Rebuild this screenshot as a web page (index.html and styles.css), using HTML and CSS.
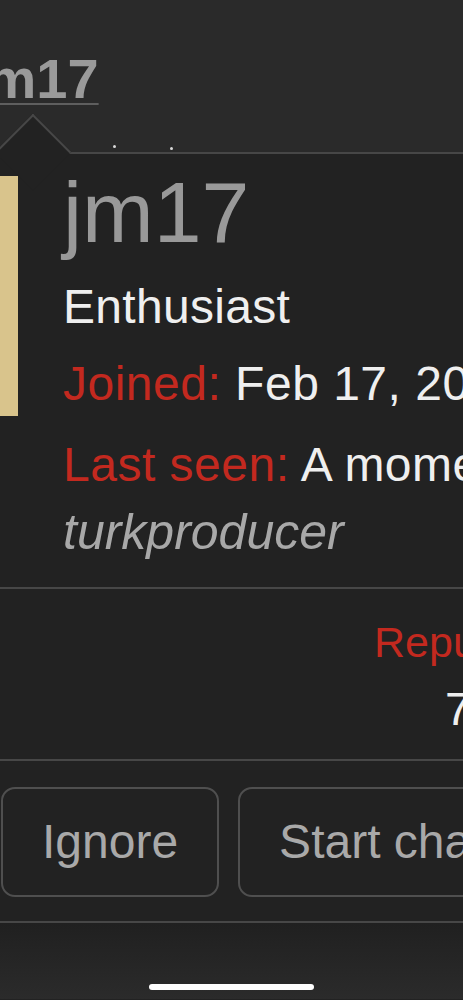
FILE: index.html
```html
<!DOCTYPE html>
<html lang="en">
<head>
<meta charset="utf-8">
<title>jm17</title>
<link rel="stylesheet" href="styles.css">
</head>
<body>
<div class="screen">
  <header class="topbar">
    <a class="username">jm17</a>
    <span class="peek peek-a"></span>
    <span class="peek peek-b"></span>
  </header>
  <div class="tooltip">
    <span class="tooltip-arrow"></span>
    <div class="profile">
      <div class="avatar"></div>
      <div class="info">
        <h4 class="name">jm17</h4>
        <div class="title">Enthusiast</div>
        <div class="row joined"><span class="label">Joined:</span> Feb 17, 2021</div>
        <div class="row seen"><span class="label">Last seen:</span> A moment ago</div>
        <div class="status">turkproducer</div>
      </div>
    </div>
    <div class="stats">
      <dl class="stat">
        <dt>Reputation</dt>
        <dd>75</dd>
      </dl>
    </div>
    <div class="actions">
      <a class="btn">Ignore</a>
      <a class="btn">Start chat</a>
    </div>
  </div>
  <footer class="home"><span class="home-bar"></span></footer>
</div>
</body>
</html>
```
FILE: styles.css
```css
html, body {
  margin: 0;
  padding: 0;
  background: #222;
  overflow: hidden;
}
.screen {
  width: 463px;
  height: 1000px;
  overflow: hidden;
  font-family: "Liberation Sans", Helvetica, Arial, sans-serif;
  background: #222;
}
.topbar {
  position: relative;
  height: 152px;
  box-sizing: border-box;
  padding-top: 51px;
  background: #2a2a2a;
}
.username {
  display: block;
  margin-left: -29px;
  font-size: 56px;
  line-height: 56px;
  font-weight: bold;
  color: #9a9a9a;
  white-space: nowrap;
  text-decoration: underline;
  text-decoration-color: #5e5e5e;
  text-decoration-thickness: 2px;
  text-underline-offset: 5px;
}
.peek {
  position: absolute;
  width: 3px;
  height: 3px;
  border-radius: 50%;
  background: #d8d8d8;
}
.peek-a { left: 113px; top: 145px; }
.peek-b { left: 170px; top: 147px; }

.tooltip {
  position: relative;
  background: #222;
  border-top: 2px solid #474747;
}
.tooltip-arrow {
  position: absolute;
  left: 6px;
  top: -29px;
  width: 54px;
  height: 54px;
  box-sizing: border-box;
  background: #222;
  border-top: 2px solid #474747;
  border-left: 2px solid #474747;
  transform: rotate(45deg);
}
.profile {
  display: flex;
  gap: 45px;
  padding: 22px 0 27px 0;
}
.avatar {
  position: relative;
  z-index: 1;
  flex-shrink: 0;
  width: 240px;
  height: 240px;
  margin-left: -222px;
  background: #d9c48c;
}
.info {
  display: flex;
  flex-direction: column;
  white-space: nowrap;
  font-size: 48px;
  line-height: 56px;
  color: #efefef;
}
.name {
  margin: 0;
  font-size: 86px;
  line-height: 72px;
  font-weight: normal;
  color: #999;
}
.title { margin-top: 31px; letter-spacing: 0.3px; }
.row { letter-spacing: 0.5px; }
.joined { margin-top: 21px; }
.seen { margin-top: 25px; }
.status {
  margin-top: 11px;
  font-size: 50px;
  font-style: italic;
  color: #a8a8a8;
}
.label { color: #c3291f; }

.stats {
  border-top: 2px solid #474747;
  padding: 28px 0 22px 374px;
  white-space: nowrap;
}
.stat { margin: 0; }
.stat dt {
  font-size: 43px;
  line-height: 50px;
  color: #c3291f;
}
.stat dd {
  margin: 14px 0 0 0;
  padding-left: 71px;
  font-size: 47px;
  line-height: 56px;
  color: #efefef;
}

.actions {
  display: flex;
  gap: 19px;
  padding: 26px 0 24px 1px;
  border-top: 2px solid #474747;
  border-bottom: 2px solid #474747;
  white-space: nowrap;
}
.btn {
  flex-shrink: 0;
  padding: 25px 39px;
  border: 2px solid #4f4f4f;
  border-radius: 14px;
  font-size: 48px;
  line-height: 56px;
  color: #a9a9a9;
}
.home {
  display: flex;
  justify-content: center;
  height: 76px;
  box-sizing: border-box;
  padding-top: 61px;
  background: linear-gradient(#202020, #2b2b2b);
}
.home-bar {
  width: 165px;
  height: 6px;
  border-radius: 3px;
  background: #fff;
}
```
